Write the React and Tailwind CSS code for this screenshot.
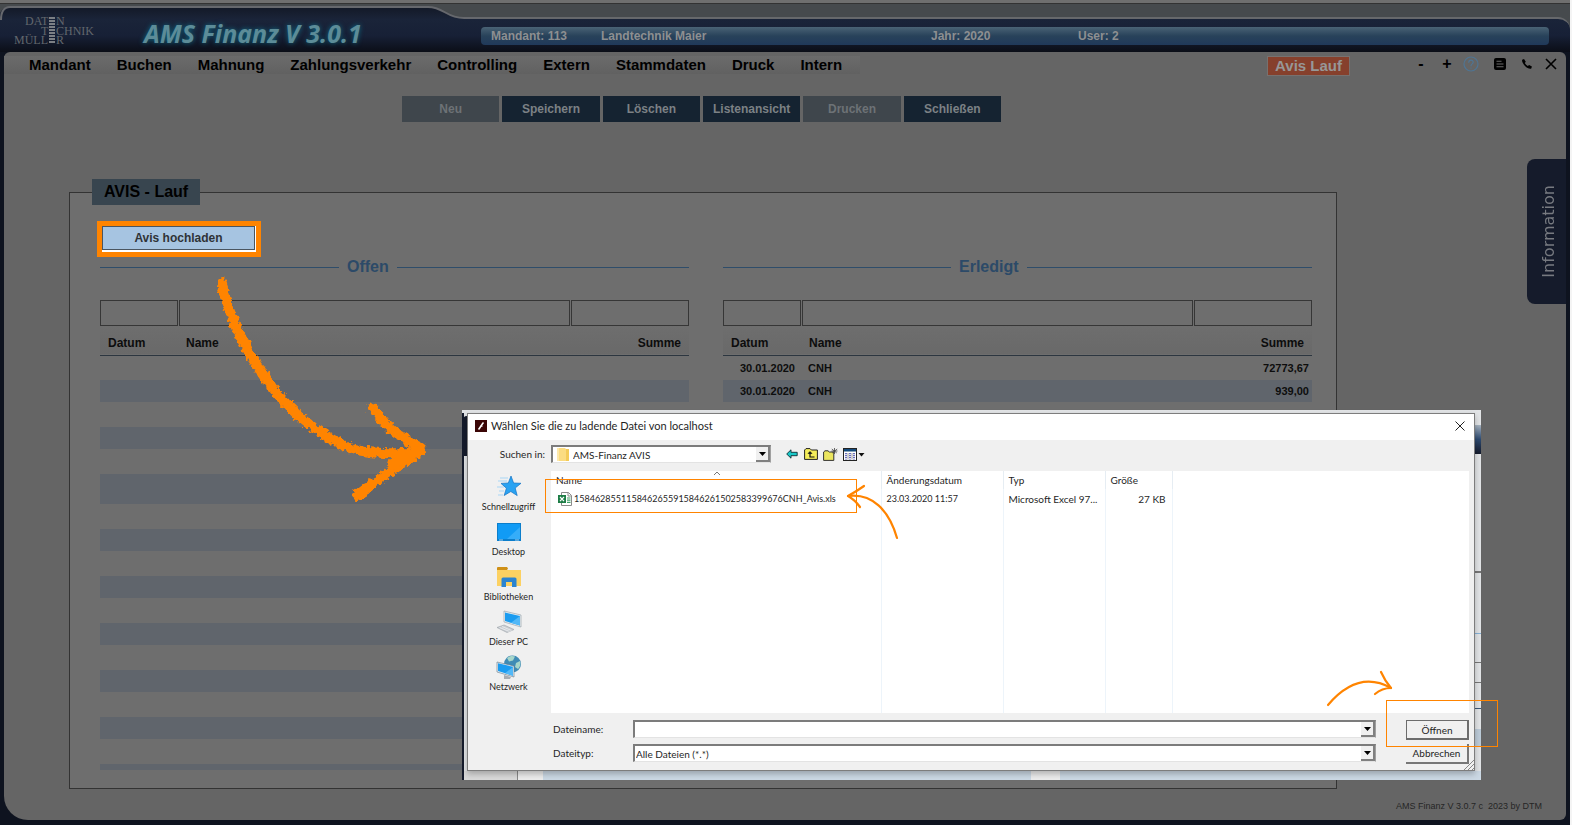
import { useState } from "react";

const menuItems = [
  "Mandant",
  "Buchen",
  "Mahnung",
  "Zahlungsverkehr",
  "Controlling",
  "Extern",
  "Stammdaten",
  "Druck",
  "Intern",
];

const actions = [
  { label: "Neu", disabled: true },
  { label: "Speichern" },
  { label: "Löschen" },
  { label: "Listenansicht" },
  { label: "Drucken", disabled: true },
  { label: "Schließen" },
];

const doneRows = [
  { datum: "30.01.2020", name: "CNH", summe: "72773,67" },
  { datum: "30.01.2020", name: "CNH", summe: "939,00" },
];

// one entry per visible table line
const rowHeights = [
  "h-[25px]", "h-[22px]", "h-[25px]", "h-[22px]", "h-[25px]", "h-[30px]",
  "h-[25px]", "h-[22px]", "h-[25px]", "h-[22px]", "h-[25px]", "h-[22px]",
  "h-[25px]", "h-[22px]", "h-[25px]", "h-[22px]", "h-[25px]", "h-[6px]",
];

function Logo() {
  return (
    <svg width="84" height="32" viewBox="0 0 84 32" className="mb-[2px] shrink-0" fill="#62676d" fontFamily="Liberation Serif, serif" fontSize="12">
      <text x="11" y="11">DAT</text>
      <text x="42" y="11">N</text>
      <text x="27" y="21">T</text>
      <text x="42" y="21">CHNIK</text>
      <text x="0" y="30">MÜLL</text>
      <text x="42" y="30">R</text>
      {[3, 6, 9, 12, 15, 18, 21, 24, 27].map((y) => (
        <rect key={y} x="35" y={y} width="6" height="2" fill="#7c8085" />
      ))}
    </svg>
  );
}

function Header() {
  return (
    <header className="relative h-[52px] border-t-[3px] border-[#6f6f6f] bg-[#464a4d] shadow-[inset_0_1px_0_#333]">
      <div className="absolute inset-x-0 top-[14px] bottom-0 rounded-tr-[12px] border-t-2 border-[#66686b] bg-gradient-to-b from-[#1a2439] via-[#172036] to-[#0b0e17]"></div>
      <svg className="absolute left-0 top-[3px]" width="480" height="46" viewBox="0 0 480 46">
        <defs>
          <linearGradient id="tab" x1="0" y1="0" x2="0" y2="1">
            <stop offset="0" stopColor="#131927" />
            <stop offset="0.28" stopColor="#1a2439" />
            <stop offset="0.64" stopColor="#172036" />
            <stop offset="1" stopColor="#0b0e17" />
          </linearGradient>
        </defs>
        <path d="M0 46V9Q1 1 9 1H428C444 1 446 12 464 12H480V46Z" fill="url(#tab)" />
        <path d="M1 14Q1 1 10 1H428C444 1 446 12 464 12H480" fill="none" stroke="#66686d" strokeWidth="2" />
      </svg>
      <div className="relative flex h-full items-center pt-[6px] pr-[21px] pl-[14px]">
        <Logo />
        <h1 className="mt-[5px] ml-[46px] w-[337px] shrink-0 font-['Open_Sans',sans-serif] text-[25px] leading-7 font-bold whitespace-nowrap text-[#5c8c98] italic [text-shadow:0_0_5px_#0d6b85]">
          AMS Finanz V 3.0.1
        </h1>
        <div className="mt-[10px] flex h-[18px] flex-1 items-center rounded-[4px] bg-gradient-to-b from-[#4a6375] via-[#28425a] to-[#20395a] pl-[10px] text-[12px] font-bold text-[#8d8f91]">
          <span className="w-[110px]">Mandant: 113</span>
          <span className="w-[330px]">Landtechnik Maier</span>
          <span className="w-[147px]">Jahr: 2020</span>
          <span>User: 2</span>
        </div>
      </div>
    </header>
  );
}

function TopMenu() {
  return (
    <div className="flex h-[26px] items-center">
      <nav className="flex h-[18px] items-center gap-[26px] bg-gradient-to-b from-[#6b6b6b] to-[#616161] pl-[25px] pr-[18px] text-[15px] font-bold text-black">
        {menuItems.map((item) => (
          <a key={item} href="#">{item}</a>
        ))}
      </nav>
      <span className="mt-px ml-auto border border-[#77716f] bg-[#86402c] px-[7px] text-[15px] leading-[18px] font-bold text-[#979797]">
        Avis Lauf
      </span>
      <div className="ml-[64px] flex items-center pr-[9px] pb-[2px] text-black">
        <button aria-label="Kleiner" className="w-[14px] text-[16px] leading-5 font-bold">-</button>
        <button aria-label="Größer" className="ml-[12px] w-[14px] text-[16px] leading-5 font-bold">+</button>
        <button aria-label="Hilfe" className="ml-[9px]">
          <svg width="16" height="16" viewBox="0 0 16 16" fill="none" stroke="#4f7594" strokeWidth="1.2" strokeLinecap="round">
            <circle cx="8" cy="8" r="7" />
            <path d="M5.800 6.300C5.800 3.500 10.200 3.500 10.200 6.200C10.200 7.800 8 8 8 9.800M8 12v.1" />
          </svg>
        </button>
        <button aria-label="Notizen" className="ml-[14px]">
          <svg width="14" height="14" viewBox="0 0 14 14">
            <rect x="1" y="1" width="12" height="12" rx="2" fill="#000" />
            <path d="M3.5 4.3h5M3.5 7h7M3.5 9.7h7" stroke="#6a6a6a" strokeWidth="1.1" />
          </svg>
        </button>
        <button aria-label="Telefon" className="ml-[14px]">
          <svg width="12" height="12" viewBox="0 0 12 12">
            <path d="M1.2 1.8 3 1l1.8 2.8-1 1.2c.7 1.3 1.700 2.200 3 2.900l1.300-.9 2.800 1.500-.6 2c-1.500.7-4.200-.3-6.300-2.500S.6 3.300 1.200 1.800z" fill="#000" />
          </svg>
        </button>
        <button aria-label="Schließen" className="ml-[12px]">
          <svg width="12" height="12" viewBox="0 0 12 12" stroke="#000" strokeWidth="1.6">
            <path d="M1 1l10 10M11 1 1 11" />
          </svg>
        </button>
      </div>
    </div>
  );
}

function AvisTable({ title, lineWidth, rows }) {
  const [filter, setFilter] = useState({ datum: "", name: "", summe: "" });

  return (
    <section className="min-w-0">
      <div className="flex h-5 items-center">
        <span className={`h-px bg-[#2f4d6a] ${lineWidth}`}></span>
        <h2 className="px-2 text-[16px] leading-5 font-bold text-[#2c4a68]">{title}</h2>
        <span className="h-px flex-1 bg-[#2f4d6a]"></span>
      </div>
      <div className="mt-[23px] grid grid-cols-[78px_1fr_118px] gap-[1px]">
        {["datum", "name", "summe"].map((key) => (
          <input
            key={key}
            aria-label={`${title} ${key}`}
            className="h-[26px] min-w-0 border border-[#363636] bg-transparent px-1 text-[12px] outline-none"
            value={filter[key]}
            onChange={(e) => setFilter({ ...filter, [key]: e.target.value })}
          />
        ))}
      </div>
      <table className="w-full table-fixed border-collapse text-[11px] leading-[22px] font-bold text-[#0d0d0d]">
        <colgroup>
          <col className="w-[79px]" />
          <col />
          <col className="w-[118px]" />
        </colgroup>
        <thead>
          <tr className="h-[29px] border-b border-[#2c3640] bg-gradient-to-b from-[#6e6e6e] to-[#696969] text-[12px]">
            <th className="pt-[6px] pl-2 text-left">Datum</th>
            <th className="pt-[6px] pl-[7px] text-left">Name</th>
            <th className="pt-[6px] pr-2 text-right">Summe</th>
          </tr>
        </thead>
        <tbody>
          {rowHeights.map((height, i) => {
            const row = rows[i];
            return (
              <tr key={i} className={`${height} ${i % 2 ? "bg-[#60656c]" : ""}`}>
                <td className="pr-[7px] text-right">{row?.datum}</td>
                <td className="pl-[6px]">{row?.name}</td>
                <td className="pr-[3px] text-right">{row?.summe}</td>
              </tr>
            );
          })}
        </tbody>
      </table>
    </section>
  );
}

/* Icons of the file dialog */

function StarIcon() {
  return (
    <svg width="26" height="24" viewBox="0 0 26 24">
      <path d="M15 1l2.600 7 7.400.3-5.800 4.700 2 7.600-6.400-4.100-6.600 4 2.200-7.300L5 8.400l7.300-.4z" fill="#2aa3f2" stroke="#1273c4" strokeWidth="0.7" />
      <path d="M4 3h8M2 6h9M1 12h7M3 16h5M2 20h5" stroke="#a9d6f5" strokeWidth="1" />
    </svg>
  );
}

function DesktopIcon() {
  return (
    <svg width="24" height="18" viewBox="0 0 24 18">
      <rect width="24" height="18" fill="#0c7ecb" />
      <rect x="1" y="1" width="22" height="15" fill="#119bf5" />
      <path d="M10 16 23 4v12z" fill="#35adf9" />
      <path d="M2 17h4M18 17h4" stroke="#bfe4ff" strokeWidth="0.8" />
    </svg>
  );
}

function LibraryIcon() {
  return (
    <svg width="24" height="22" viewBox="0 0 24 22">
      <path d="M0 2h10v2h14v16H0z" fill="#fcd162" />
      <path d="M0 2q0-1 1-1h9l1 1.500L10 4H0z" fill="#cf9017" />
      <path d="M4.500 21v-8q0-1.500 1.500-1.500h12q1.500 0 1.500 1.500v8H15v-5H9V21z" fill="#2b84d0" />
    </svg>
  );
}

function PcIcon() {
  return (
    <svg width="26" height="24" viewBox="0 0 26 24">
      <path d="M8 1l17 4v12L8 12z" fill="#e8eef2" stroke="#8f9aa3" strokeWidth="0.6" />
      <path d="M9 2.500l15 3.500v9.500L9 11z" fill="#1b9cf0" />
      <path d="M15 12.800 24 6v9.500z" fill="#52b8f7" />
      <path d="M1 17.500l7-2.500 10 4.500-7 3z" fill="#c9ced3" stroke="#9aa1a8" strokeWidth="0.6" />
      <path d="M3.500 17.500l10 4M6 16.500l9.500 4" stroke="#f3f5f6" strokeWidth="0.7" />
    </svg>
  );
}

function NetworkIcon() {
  return (
    <svg width="26" height="24" viewBox="0 0 26 24">
      <circle cx="16.500" cy="9" r="8.500" fill="#3f8bb5" />
      <path d="M11 3c3-2.500 6-2.500 8-1.500l-2 4-4 1zM20 8l4-2c1 3 0 6-2 8l-3-2z" fill="#a7d6ca" />
      <path d="M1 7l17 4v11L1 17z" fill="#e8eef2" stroke="#5f7686" strokeWidth="0.6" />
      <path d="M2 8.300l15 3.500v9L2 16z" fill="#1b9cf0" />
      <path d="M9 18.200 17 12v8.800z" fill="#52b8f7" />
      <path d="M8 20l7 2-1 2H8z" fill="#a7adb3" />
    </svg>
  );
}

function FolderIcon() {
  return (
    <svg width="12" height="14" viewBox="0 0 12 14">
      <path d="M0 1h8l1 1h3v12H0z" fill="#fbdc82" />
      <path d="M9 2h3v12H9z" fill="#f4cb58" />
      <path d="M0 1h2v13H0z" fill="#fde9ac" />
    </svg>
  );
}

function BackIcon() {
  return (
    <svg width="12" height="10" viewBox="0 0 12 10">
      <path d="M.7 5 5 .8v2.500h6.200v3.400H5v2.500z" fill="#19c8c8" stroke="#0c2c33" strokeWidth="0.9" />
    </svg>
  );
}

function UpIcon() {
  return (
    <svg width="14" height="12" viewBox="0 0 14 12">
      <path d="M.6 11.400V2L2 .6h4L7.400 2h6v9.400z" fill="#f5ee5a" stroke="#222" strokeWidth="1" />
      <path d="M4 5.500 6 3.500l2 2z" fill="#111" stroke="#111" strokeWidth="0.6" />
      <path d="M6 5v4h4.500" fill="none" stroke="#111" strokeWidth="1.200" />
    </svg>
  );
}

function NewFolderIcon() {
  return (
    <svg width="15" height="13" viewBox="0 0 15 13">
      <path d="M.6 12.400V4L2 2.800h3L6.300 4h4.500v8.400z" fill="#ece65f" stroke="#333" strokeWidth="1" />
      <path d="M11.500 0v6M8.800 1l5 4M14.200 1l-5 4M8.500 3h6" stroke="#444" strokeWidth="0.8" />
    </svg>
  );
}

function ViewIcon() {
  return (
    <svg width="22" height="13" viewBox="0 0 22 13">
      <rect x="0.500" y="0.500" width="13" height="12" fill="#fff" stroke="#222" />
      <rect x="1" y="1" width="12" height="2.500" fill="#144a7c" />
      <path d="M3 5v6.500M7 5v6.500M11 5v6.500" stroke="#2a33a0" strokeWidth="1.400" strokeDasharray="1.200 0.800" />
      <path d="M5 5v6.500M9 5v6.500" stroke="#888" strokeWidth="0.800" />
      <path d="M15.500 5h6l-3 3.500z" fill="#111" />
    </svg>
  );
}

function ExcelIcon() {
  return (
    <svg width="14" height="14" viewBox="0 0 14 14" className="shrink-0">
      <path d="M3.500.5h7l3 3v10h-10z" fill="#fff" stroke="#8b8b8b" />
      <path d="M10 .5v3.500h3.500" fill="none" stroke="#8b8b8b" />
      <path d="M9 6h3.500M9 8.200h3.500M9 10.400h3.500" stroke="#3aa065" strokeWidth="1.200" />
      <rect y="3" width="8" height="8" fill="#1d7d46" />
      <path d="M2 5l4 4.200M6 5 2 9.200" stroke="#fff" strokeWidth="1.200" />
    </svg>
  );
}

const places = [
  { label: "Schnellzugriff", Icon: StarIcon },
  { label: "Desktop", Icon: DesktopIcon },
  { label: "Bibliotheken", Icon: LibraryIcon },
  { label: "Dieser PC", Icon: PcIcon },
  { label: "Netzwerk", Icon: NetworkIcon },
];

const sunken = "border-t-2 border-l-2 border-r border-b border-t-[#7c7c7c] border-l-[#7c7c7c] border-r-[#a0a0a0] border-b-[#e3e3e3] bg-white";

function DropArrow() {
  return (
    <span className="pointer-events-none absolute top-[2px] right-[1px] bottom-[1px] flex w-[14px] items-center justify-center border-r-2 border-b-2 border-[#808080] bg-[#f0f0f0]">
      <svg width="7" height="4" viewBox="0 0 7 4"><path d="M0 0h7L3.500 4z" fill="#000" /></svg>
    </span>
  );
}

function FileDialog() {
  const [fileName, setFileName] = useState("");

  return (
    <div className="absolute top-[410px] left-[462px] w-[1019px] bg-[#e2e4e6] pt-[3px] pr-[6px] pb-[9px] pl-[5px] font-[Lato,sans-serif] text-[10px] leading-[14px] text-[#1f1f1f]">
      {/* strip of the window underneath */}
      <div className="absolute top-[3px] bottom-0 left-0 w-[2px] bg-[#151b2c]"></div>
      <div className="absolute top-[6px] left-0 h-[40px] w-[5px] rounded-tl-md bg-[#151b2c]"></div>
      <div className="absolute top-[15px] right-0 h-[29px] w-[6px] bg-gradient-to-b from-[#a8b4c0] via-[#2d4a70] to-[#151b2c]"></div>
      <div className="absolute top-[161px] right-0 h-[2px] w-[6px] bg-[#777]"></div>
      <div className="absolute top-[223px] right-0 h-px w-[6px] bg-[#86b2d8]"></div>
      <div className="absolute top-[252px] right-0 h-px w-[6px] bg-[#777]"></div>
      <div className="absolute top-[272px] right-0 h-px w-[6px] bg-[#777]"></div>
      <div className="absolute top-[298px] right-0 h-px w-[6px] bg-[#3d5878]"></div>
      <div className="absolute top-[319px] right-0 h-[18px] w-[6px] bg-[#bccbd8]"></div>
      <div className="absolute right-0 bottom-0 left-[2px] flex h-[9px]">
        <span className="w-[54px] border-r border-[#888] bg-[#d9d9d9]"></span>
        <span className="w-[25px] bg-[#ececec]"></span>
        <span className="flex-1 bg-[#cbd8e4]"></span>
        <span className="w-[29px] bg-[#ececec]"></span>
        <span className="w-[421px] bg-[#cbd8e4]"></span>
      </div>

      <div role="dialog" aria-label="Datei wählen" className="relative border border-[#7d7d7d] bg-[#f0f0f0] shadow-[0_3px_6px_rgba(0,0,0,0.25)]">
        <div className="flex h-[26px] items-center bg-white pr-[9px] pb-[2px] pl-[7px]">
          <svg width="12" height="12" viewBox="0 0 12 12">
            <rect width="12" height="12" fill="#3b0606" />
            <path d="M3.500 9.500C5 8 7 4 8.500 2.500" fill="none" stroke="#fff" strokeWidth="1.600" />
            <path d="M5.500 6.200h2.200" stroke="#fff" strokeWidth="0.800" />
          </svg>
          <span className="ml-1 text-[11px]">Wählen Sie die zu ladende Datei von localhost</span>
          <button aria-label="Dialog schließen" className="ml-auto">
            <svg width="10" height="10" viewBox="0 0 10 10" stroke="#222" strokeWidth="1"><path d="M.5.5l9 9M9.500.5l-9 9" /></svg>
          </button>
        </div>

        <div className="mb-[3px] flex h-[28px] items-center">
          <label htmlFor="folder" className="w-[83px] pr-[6px] text-right">Suchen in:</label>
          <div className="relative w-[220px]">
            <select id="folder" className={`block h-[18px] w-full appearance-none pl-5 ${sunken}`}>
              <option>AMS-Finanz AVIS</option>
            </select>
            <span className="pointer-events-none absolute top-[2px] left-[6px]"><FolderIcon /></span>
            <DropArrow />
          </div>
          <button aria-label="Zurück" className="ml-[15px]"><BackIcon /></button>
          <button aria-label="Übergeordneter Ordner" className="ml-[6px]"><UpIcon /></button>
          <button aria-label="Neuer Ordner" className="ml-[5px]"><NewFolderIcon /></button>
          <button aria-label="Ansicht" className="ml-[5px]"><ViewIcon /></button>
        </div>

        <div className="flex pr-[5px]">
          <div className="w-[83px] shrink-0 pt-[3px] pr-[2px]">
            {places.map(({ label, Icon }) => (
              <button key={label} className="flex h-[45px] w-full flex-col items-center text-[9px]">
                <span className="flex h-[26px] items-center"><Icon /></span>
                <span className="leading-[14px]">{label}</span>
              </button>
            ))}
          </div>
          <table className="h-[242px] flex-1 table-fixed border-collapse bg-white text-left">
            <colgroup>
              <col className="w-[330px]" />
              <col className="w-[122px]" />
              <col className="w-[102px]" />
              <col className="w-[67px]" />
              <col />
            </colgroup>
            <thead>
              <tr className="h-[18px] align-middle">
                <th className="relative border-r border-[#e6edf3] pl-[5px] font-normal">
                  Name
                  <svg className="absolute top-0 left-[162px]" width="8" height="4" viewBox="0 0 8 4" fill="none" stroke="#777"><path d="M1 4l3-3 3 3" /></svg>
                </th>
                <th className="border-r border-[#e6edf3] pl-[5px] font-normal">Änderungsdatum</th>
                <th className="border-r border-[#e6edf3] pl-[5px] font-normal">Typ</th>
                <th className="border-r border-[#e6edf3] pl-[5px] font-normal">Größe</th>
                <th></th>
              </tr>
            </thead>
            <tbody>
              <tr className="h-[20px]">
                <td className="border-r border-[#edf4fa] pl-[7px]">
                  <span className="flex items-center gap-[2px] text-[9px]">
                    <ExcelIcon />
                    1584628551158462655915846261502583399676CNH_Avis.xls
                  </span>
                </td>
                <td className="border-r border-[#edf4fa] pl-[5px] text-[9px]">23.03.2020 11:57</td>
                <td className="border-r border-[#edf4fa] pl-[5px] whitespace-nowrap">Microsoft Excel 97...</td>
                <td className="border-r border-[#edf4fa] pr-[6px] text-right">27 KB</td>
                <td></td>
              </tr>
              <tr>
                <td className="border-r border-[#edf4fa]"></td>
                <td className="border-r border-[#edf4fa]"></td>
                <td className="border-r border-[#edf4fa]"></td>
                <td className="border-r border-[#edf4fa]"></td>
                <td></td>
              </tr>
            </tbody>
          </table>
        </div>

        <div className="flex pt-[7px] pr-[5px] pb-[6px] pl-[85px]">
          <div className="flex flex-1 flex-col gap-[6px]">
            <div className="flex items-center">
              <label htmlFor="filename" className="w-[80px]">Dateiname:</label>
              <div className="relative flex-1">
                <input
                  id="filename"
                  value={fileName}
                  onChange={(e) => setFileName(e.target.value)}
                  className={`block h-[18px] w-full px-1 outline-none ${sunken}`}
                />
                <DropArrow />
              </div>
            </div>
            <div className="flex items-center">
              <label htmlFor="filetype" className="w-[80px]">Dateityp:</label>
              <div className="relative flex-1">
                <select id="filetype" className={`block h-[18px] w-full appearance-none pl-[1px] ${sunken}`}>
                  <option>Alle Dateien (*.*)</option>
                </select>
                <DropArrow />
              </div>
            </div>
          </div>
          <div className="ml-[30px] flex w-[63px] flex-col gap-1">
            <button className="h-[20px] border-t border-r-2 border-b-2 border-l border-[#6c6c6c]">Öffnen</button>
            <button className="h-[20px] border-r-2 border-b-2 border-[#777]">Abbrechen</button>
          </div>
        </div>
        <svg className="absolute right-0 bottom-0" width="10" height="10" viewBox="0 0 10 10" stroke="#888">
          <path d="M0 10 10 0M4 10l6-6M8 10l2-2" />
        </svg>
      </div>
    </div>
  );
}

// hand-drawn hints on top of the page
function Annotations() {
  return (
    <>
      <div className="pointer-events-none absolute top-[479px] left-[545px] h-[34px] w-[312px] border border-[#ff8400]"></div>
      <div className="pointer-events-none absolute top-[700px] left-[1386px] h-[47px] w-[112px] border border-[#ff8400]"></div>
      <svg className="pointer-events-none absolute top-0 left-0" width="1572" height="825" viewBox="0 0 1572 825" fill="none" stroke="#ff8400" strokeLinecap="round" strokeLinejoin="round">
        <defs>
          <filter id="crayon" x="-10%" y="-10%" width="120%" height="120%">
            <feTurbulence type="fractalNoise" baseFrequency="0.25" numOctaves="2" seed="4" />
            <feDisplacementMap in="SourceGraphic" scale="8" xChannelSelector="R" yChannelSelector="G" />
          </filter>
        </defs>
        <g filter="url(#crayon)" strokeWidth="10">
          <path d="M222 283C225 303 234 323 242 339S261 373 272 387S295 414 306 422S333 441 347 447S383 454 415 453" />
          <path d="M373 408C381 421 397 436 421 448" strokeWidth="10" />
          <path d="M357 496C369 485 396 469 420 450" />
          <path d="M394 464C404 460 414 456 420 450" strokeWidth="12" />
        </g>
        <g strokeWidth="2.200">
          <path d="M848 496C872 493 889 510 897 538" />
          <path d="M864 486Q857 491 848 496Q855 500 860 507" />
          <path d="M1328 705C1345 685 1366 674 1391 688" />
          <path d="M1381 672Q1385 681 1391 688Q1382 688 1375 694" />
        </g>
      </svg>
    </>
  );
}

export default function App() {
  return (
    <div className="relative min-h-screen overflow-hidden border-r-2 border-[#f4f4f4] bg-[#0e131f] pb-[5px] font-['Liberation_Sans',Arial,sans-serif]">
      <Header />

      <main className="relative ml-1 mr-1 rounded-t-[6px] rounded-br-[6px] rounded-bl-[24px] bg-[#656565]">
        <TopMenu />

        <div className="mt-[18px] ml-[398px] grid w-[599px] grid-cols-6 gap-[3px]">
          {actions.map((a) => (
            <button
              key={a.label}
              disabled={a.disabled}
              className={`h-[26px] text-[12px] font-bold ${a.disabled ? "bg-[#3f464c] text-[#6d7276]" : "bg-[#152331] text-[#7c8185]"}`}
            >
              {a.label}
            </button>
          ))}
        </div>

        <fieldset className="mt-[57px] mr-[229px] ml-[65px] border border-[#333] bg-[#6e6e6e] pr-6 pb-[18px] pl-[27px]">
          <legend className="-ml-[5px] h-[26px] bg-[#38454f] px-[12px] text-[16px] leading-[26px] font-bold text-black">AVIS - Lauf</legend>
          <div className="mt-4 w-[164px] border-5 border-[#ff8400] bg-white pr-px pb-[2px]">
            <button className="block h-[24px] w-full border border-[#4a5560] bg-[#a6c4e1] text-[12px] font-bold text-[#2f3337]">
              Avis hochladen
            </button>
          </div>
          <div className="grid grid-cols-2 gap-[34px] pl-[3px]">
            <AvisTable title="Offen" lineWidth="w-[239px]" rows={[]} />
            <AvisTable title="Erledigt" lineWidth="w-[228px]" rows={doneRows} />
          </div>
        </fieldset>

        <footer className="flex h-[31px] items-center justify-end pt-[5px] pr-[24px] text-[9px] whitespace-pre text-[#262626]">
          AMS Finanz V 3.0.7 c  2023 by DTM
        </footer>

        <button className="absolute top-[107px] right-0 flex h-[145px] w-[39px] items-center justify-center rounded-l-lg bg-[#151b2b] pl-1 text-[16px] text-[#777a80]">
          <span className="rotate-180 font-['DejaVu_Sans',sans-serif] [writing-mode:vertical-rl]">Information</span>
        </button>
      </main>

      <FileDialog />
      <Annotations />
    </div>
  );
}
